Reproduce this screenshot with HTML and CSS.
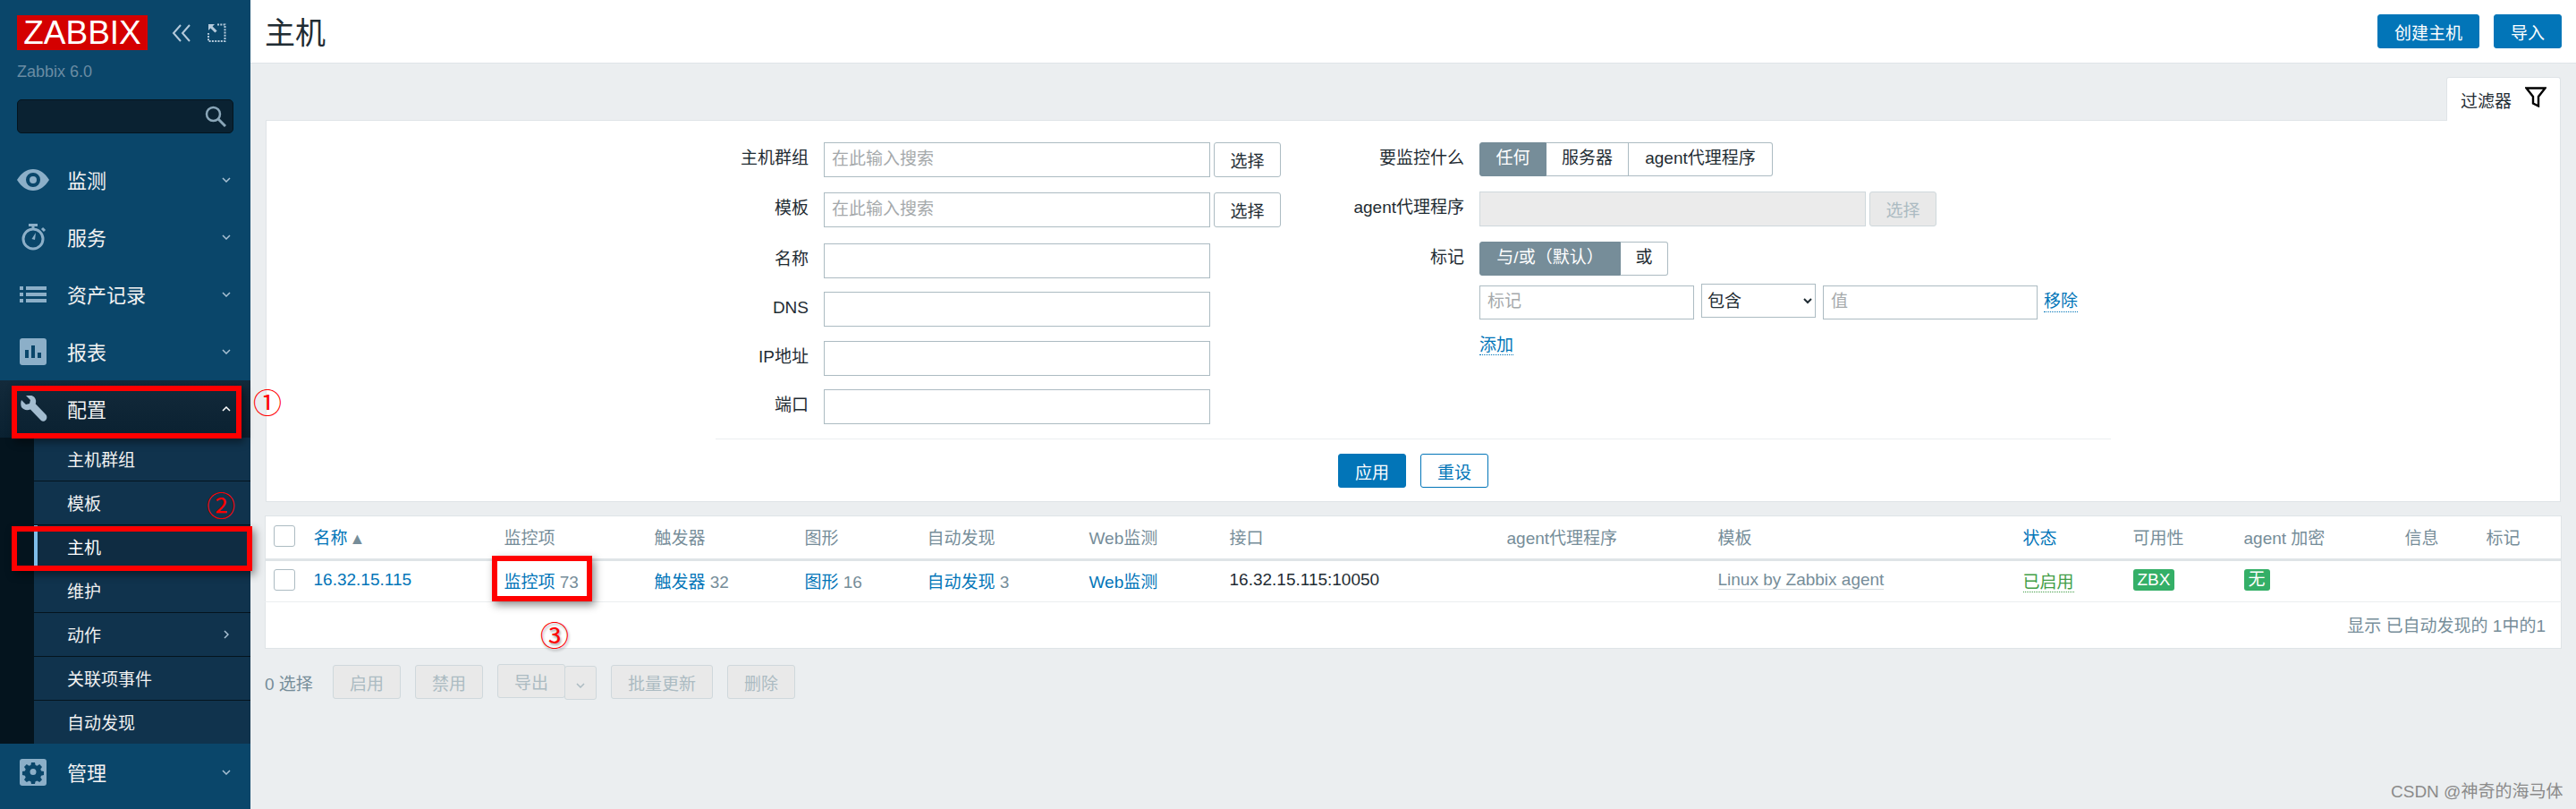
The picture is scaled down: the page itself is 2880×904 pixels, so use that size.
FILE: index.html
```html
<!DOCTYPE html>
<html lang="zh-CN">
<head>
    <meta charset="UTF-8">
    <title>主机 - Zabbix</title>
    <link rel="stylesheet" href="styles.css">
</head>
<body>

    <svg class="sprites" width="0" height="0">
        <symbol id="chev-down" viewBox="0 0 10 6"><path d="M1 1l4 4 4-4" fill="none" stroke="currentColor" stroke-width="1.5"/></symbol>
    </svg>

    <!-- Left menu -->
    <aside class="sidebar">
        <div class="brand">
            <div class="logo">ZABBIX</div>
            <svg class="brand-icon collapse" viewBox="0 0 22 20"><path d="M10 1L2 10l8 9M20 1l-8 9 8 9" fill="none" stroke="currentColor" stroke-width="2"/></svg>
            <svg class="brand-icon kiosk" viewBox="0 0 21 21"><path d="M1 1h7L5.6 3.4l5 5-2.2 2.2-5-5L1 8z" fill="currentColor"/><path d="M11 1.500h8.500V20H1v-9" fill="none" stroke="currentColor" stroke-width="2" stroke-dasharray="2 1.300"/></svg>
        </div>
        <div class="version">Zabbix 6.0</div>
        <div class="search">
            <svg viewBox="0 0 24 24" class="search-icon"><circle cx="9.500" cy="9.500" r="7.500" fill="none" stroke="currentColor" stroke-width="2.500"/><path d="M15 15l8 8" stroke="currentColor" stroke-width="3"/></svg>
        </div>

        <nav class="menu">
            <a class="menu-item">
                <svg class="menu-icon" viewBox="0 0 36 24"><path fill-rule="evenodd" d="M0 12C5 4 11 0 18 0s13 4 18 12c-5 8-11 12-18 12S5 20 0 12zm18 8a8 8 0 1 0 0-16 8 8 0 0 0 0 16zm0-4a4 4 0 1 1 0-8 4 4 0 0 1 0 8z" fill="currentColor"/></svg>
                <span>监测</span>
                <svg class="chev"><use href="#chev-down"/></svg>
            </a>
            <a class="menu-item">
                <svg class="menu-icon" viewBox="0 0 36 30"><circle cx="18" cy="17" r="11" fill="none" stroke="currentColor" stroke-width="3"/><path d="M13 1.500h10M18 2v4M28 5l3 3" stroke="currentColor" stroke-width="3" fill="none"/><path d="M21 10l-1 8-3.500-1z" fill="currentColor"/></svg>
                <span>服务</span>
                <svg class="chev"><use href="#chev-down"/></svg>
            </a>
            <a class="menu-item">
                <svg class="menu-icon" viewBox="0 0 36 18"><path d="M3 0h4v4H3zM3 7h4v4H3zM3 14h4v4H3zM10 0h23v4H10zM10 7h23v4H10zM10 14h23v4H10z" fill="currentColor"/></svg>
                <span>资产记录</span>
                <svg class="chev"><use href="#chev-down"/></svg>
            </a>
            <a class="menu-item">
                <svg class="menu-icon" viewBox="0 0 36 30"><rect x="3" y="0" width="30" height="30" rx="3" fill="currentColor"/><path d="M9 13h4v9H9zM16 8h4v14h-4zM23 16h4v6h-4z" fill="#0a466a"/></svg>
                <span>报表</span>
                <svg class="chev"><use href="#chev-down"/></svg>
            </a>

            <div class="menu-group">
                <a class="menu-item open">
                    <svg class="menu-icon" viewBox="0 0 36 30"><path d="M5 5l5 5 4-1 1-4-5-5c5-1.500 10 .500 11 5 .300 1.500.200 3-.300 4.300L32 21c2 2 1.500 4.500.500 6-1.500 2-4 2.500-6 .500L15 15.500c-4 1.500-8 .500-10-2.500-1-2.500-1-5.500 0-8z" fill="currentColor"/></svg>
                    <span>配置</span>
                    <svg class="chev up"><use href="#chev-down"/></svg>
                </a>
                <ul class="submenu">
                    <li>主机群组</li>
                    <li>模板</li>
                    <li class="active">主机</li>
                    <li>维护</li>
                    <li class="has-more">动作<svg class="chev side"><use href="#chev-down"/></svg></li>
                    <li>关联项事件</li>
                    <li>自动发现</li>
                </ul>
            </div>

            <a class="menu-item">
                <svg class="menu-icon" viewBox="0 0 36 30"><rect x="3" y="0" width="30" height="30" rx="3" fill="currentColor"/><path fill-rule="evenodd" d="M16 5h4l.6 3 2 .8 2.600-1.700 2.800 2.800-1.700 2.600.8 2 2.900.6v4l-2.900.6-.8 2 1.700 2.600-2.800 2.800-2.600-1.700-2 .8-.6 2.900h-4l-.6-2.900-2-.8-2.600 1.700-2.800-2.800 1.700-2.600-.8-2-2.900-.6v-4l2.900-.6.800-2-1.700-2.600 2.800-2.800 2.600 1.700 2-.8zm2 7a3.500 3.500 0 1 0 0 7 3.500 3.500 0 0 0 0-7z" fill="#0a466a" transform="translate(0 -1)"/></svg>
                <span>管理</span>
                <svg class="chev"><use href="#chev-down"/></svg>
            </a>
        </nav>
    </aside>

    <main class="main">
        <header class="topbar">
            <h1>主机</h1>
            <div class="topbar-actions">
                <button class="btn primary wide">创建主机</button>
                <button class="btn primary">导入</button>
            </div>
        </header>

        <div class="content">
            <div class="filter-tab-row">
                <div class="filter-tab">
                    过滤器
                    <svg viewBox="0 0 24 23" class="funnel"><path d="M1.500 1.500h21L15 11v10.500l-6-3V11z" fill="none" stroke="#000" stroke-width="2.400"/></svg>
                </div>
            </div>

            <section class="filter">
                <div class="filter-cols">
                    <div class="form-grid left">
                        <label>主机群组</label>
                        <div class="field"><input class="input" placeholder="在此输入搜索"><button class="btn pick">选择</button></div>
                        <label>模板</label>
                        <div class="field"><input class="input" placeholder="在此输入搜索"><button class="btn pick">选择</button></div>
                        <label>名称</label>
                        <div class="field"><input class="input"></div>
                        <label>DNS</label>
                        <div class="field"><input class="input"></div>
                        <label>IP地址</label>
                        <div class="field"><input class="input"></div>
                        <label>端口</label>
                        <div class="field"><input class="input"></div>
                    </div>

                    <div class="form-grid right">
                        <label>要监控什么</label>
                        <div class="segments">
                            <span class="segment on any">任何</span>
                            <span class="segment server">服务器</span>
                            <span class="segment proxy">agent代理程序</span>
                        </div>
                        <label>agent代理程序</label>
                        <div class="field"><input class="input" disabled><button class="btn pick off" disabled>选择</button></div>
                        <label>标记</label>
                        <div class="segments">
                            <span class="segment on andor">与/或（默认）</span>
                            <span class="segment or">或</span>
                        </div>
                        <span></span>
                        <div class="tag-row">
                            <input class="input tag" placeholder="标记">
                            <select class="select"><option>包含</option></select>
                            <input class="input tag" placeholder="值">
                            <a class="link dotted">移除</a>
                        </div>
                        <span></span>
                        <div><a class="link dotted">添加</a></div>
                    </div>
                </div>

                <div class="filter-actions">
                    <button class="btn primary">应用</button>
                    <button class="btn outline">重设</button>
                </div>
            </section>

            <table class="hosts">
                <thead>
                    <tr>
                        <th><span class="check"></span></th>
                        <th class="link">名称<span class="sort">▲</span></th>
                        <th>监控项</th>
                        <th>触发器</th>
                        <th>图形</th>
                        <th>自动发现</th>
                        <th>Web监测</th>
                        <th>接口</th>
                        <th>agent代理程序</th>
                        <th>模板</th>
                        <th class="link">状态</th>
                        <th>可用性</th>
                        <th>agent 加密</th>
                        <th>信息</th>
                        <th>标记</th>
                    </tr>
                </thead>
                <tbody>
                    <tr>
                        <td><span class="check"></span></td>
                        <td class="link">16.32.15.115</td>
                        <td><a class="link">监控项</a> 73</td>
                        <td><a class="link">触发器</a> 32</td>
                        <td><a class="link">图形</a> 16</td>
                        <td><a class="link">自动发现</a> 3</td>
                        <td class="link">Web监测</td>
                        <td class="dark">16.32.15.115:10050</td>
                        <td></td>
                        <td><a class="tpl">Linux by Zabbix agent</a></td>
                        <td><a class="enabled">已启用</a></td>
                        <td><span class="badge">ZBX</span></td>
                        <td><span class="badge">无</span></td>
                        <td></td>
                        <td></td>
                    </tr>
                </tbody>
                <tfoot>
                    <tr>
                        <td colspan="15">显示 已自动发现的 1中的1</td>
                    </tr>
                </tfoot>
            </table>

            <div class="bulk">
                <span class="selected">0 选择</span>
                <button class="btn off">启用</button>
                <button class="btn off">禁用</button>
                <div class="split">
                    <button class="btn off">导出</button>
                    <button class="btn off caret"><svg class="chev"><use href="#chev-down"/></svg></button>
                </div>
                <button class="btn off long">批量更新</button>
                <button class="btn off">删除</button>
            </div>
        </div>
    </main>

    <!-- Red markers drawn on top of the screenshot -->
    <div class="mark mark-menu"></div>
    <div class="mark mark-hosts"></div>
    <div class="mark mark-items"></div>
    <span class="num num-1">①</span>
    <span class="num num-2">②</span>
    <span class="num num-3">③</span>
    <span class="watermark">CSDN @神奇的海马体</span>

</body>
</html>
```

FILE: styles.css
```css
* {
    margin: 0;
    padding: 0;
    box-sizing: border-box;
}

body {
    font-family: "Liberation Sans", "Noto Sans CJK SC", sans-serif;
    font-size: 19px;
    color: #1f2c33;
    display: flex;
    width: 2880px;
    height: 904px;
    overflow: hidden;
    position: relative;
    background: #ebeef0;
}

.sprites {
    position: absolute;
}

/* Sidebar */
.sidebar {
    width: 280px;
    flex-shrink: 0;
    height: 904px;
    background: #0a466a;
    padding-top: 17px;
    color: #f2f2f2;
}

.brand {
    display: flex;
    align-items: center;
    padding-left: 19px;
    height: 39px;
}

.logo {
    width: 146px;
    height: 39px;
    background: #d40000;
    color: #fff;
    font-size: 37px;
    line-height: 39px;
    text-align: center;
}

.brand-icon {
    color: #b5cadb;
}

.collapse {
    width: 22px;
    height: 20px;
    margin-left: 27px;
}

.kiosk {
    width: 21px;
    height: 21px;
    margin-left: 18px;
}

.version {
    margin: 13px 0 0 19px;
    font-size: 18px;
    line-height: 22px;
    color: #6a8ca3;
}

.search {
    margin: 20px 0 0 19px;
    width: 242px;
    height: 38px;
    background: #0a2232;
    border: 1px solid #04141e;
    border-radius: 5px;
    position: relative;
    display: flex;
    justify-content: flex-end;
    align-items: center;
    padding-right: 7px;
}

.search-icon {
    width: 24px;
    height: 24px;
    color: #8aa6b8;
}

.menu {
    margin-top: 20px;
}

.menu-item {
    display: flex;
    align-items: center;
    height: 64px;
    font-size: 22px;
    padding-left: 19px;
    position: relative;
}

.menu-item span {
    position: absolute;
    left: 75px;
    margin-top: -2px;
}

.menu-icon {
    width: 36px;
    max-height: 30px;
    color: #8cafc8;
}

.menu-item .chev {
    position: absolute;
    left: 248px;
    top: 29px;
    color: #a9c1d3;
}

.chev {
    width: 10px;
    height: 6px;
}

.chev.up {
    transform: rotate(180deg);
    color: #fff !important;
}

.chev.side {
    transform: rotate(-90deg);
    position: absolute;
    left: 210px;
    top: 21px;
    color: #a9c1d3;
}

.menu-group {
    background: #04141e;
}

.menu-item.open {
    background: linear-gradient(#132a3b, #0a2131);
}

.menu-item.open .menu-icon {
    color: #a3bccf;
}

.submenu {
    list-style: none;
    margin-left: 38px;
    height: 342px;
    display: flex;
    flex-direction: column;
    background: #10334d;
}

.submenu li {
    flex: 1;
    display: flex;
    align-items: center;
    padding-left: 37px;
    padding-bottom: 2px;
    border-bottom: 1px solid #04141e;
    position: relative;
}

.submenu li:last-child {
    border-bottom: none;
}

.submenu li.active {
    background: #0f2c42;
    color: #fff;
    border-left: 4px solid #7fbde9;
    padding-left: 33px;
}

/* Main area */
.main {
    flex: 1;
    min-width: 0;
}

.topbar {
    height: 71px;
    background: #fff;
    border-bottom: 1px solid #dfe4e7;
    display: flex;
    justify-content: space-between;
    align-items: center;
    padding: 0 16px 0 16px;
}

.topbar h1 {
    font-size: 34px;
    font-weight: normal;
    margin-top: -2px;
}

.topbar-actions {
    display: flex;
    gap: 16px;
}

.btn {
    font-family: inherit;
    font-size: 19px;
    height: 38px;
    width: 76px;
    border-radius: 3px;
    border: 1px solid #acbbc2;
    background: #fff;
    color: #1f2c33;
}

.btn.primary {
    background: #0275b8;
    border-color: #0275b8;
    color: #fff;
}

.btn.wide {
    width: 114px;
}

.btn.outline {
    border-color: #0275b8;
    color: #0275b8;
}

.btn.off {
    background: #e9e9e9;
    border-color: #cfd8dc;
    color: #acbbc2;
}

.btn.pick {
    width: 75px;
    margin-left: 4px;
    height: 39px;
}

.content {
    padding: 15px 17px 0 16px;
}

.filter-tab-row {
    display: flex;
    justify-content: flex-end;
    height: 48px;
}

.filter-tab {
    width: 128px;
    height: 49px;
    background: #fff;
    border: 1px solid #dfe4e7;
    border-bottom: none;
    border-radius: 3px 3px 0 0;
    display: flex;
    align-items: center;
    padding-left: 15px;
    position: relative;
    z-index: 1;
}

.funnel {
    width: 24px;
    height: 23px;
    margin-left: 15px;
    margin-top: -6px;
}

/* Filter form */
.filter {
    margin-left: 1px;
    height: 427px;
    background: #fff;
    border: 1px solid #dfe4e7;
    padding-top: 24px;
}

.filter-cols {
    display: flex;
    height: 331px;
    padding-left: 499px;
}

.form-grid {
    display: grid;
    column-gap: 17px;
    align-items: start;
}

.form-grid label {
    text-align: right;
    line-height: 36px;
    height: 38px;
}

.form-grid.left {
    width: 636px;
    grid-template-columns: 107px 1fr;
    grid-template-rows: 56px 57px 54px 55px 54px 39px;
}

.form-grid.right {
    margin-left: 7px;
    grid-template-columns: 197px 1fr;
    grid-template-rows: 55px 56px 47px 53px 30px;
}

.field {
    display: flex;
    align-items: flex-start;
}

.input {
    font-family: inherit;
    font-size: 19px;
    width: 432px;
    height: 39px;
    border: 1px solid #acbbc2;
    padding: 0 8px 2px;
    background: #fff;
    color: #1f2c33;
    outline: none;
}

.input::placeholder {
    color: #a5a9ab;
}

.input:disabled {
    background: #ebebeb;
    border-color: #cfd8dc;
}

.segments {
    display: flex;
    height: 38px;
}

.segment {
    border: 1px solid #acbbc2;
    border-left: none;
    line-height: 34px;
    text-align: center;
    background: #fff;
}

.segment:first-child {
    border-left: 1px solid #768d99;
    border-radius: 3px 0 0 3px;
}

.segment:last-child {
    border-radius: 0 3px 3px 0;
}

.segment.on {
    background: #768d99;
    border-color: #768d99;
    color: #fff;
}

.any { width: 75px; }
.server { width: 92px; }
.proxy { width: 161px; }
.andor { width: 158px; }
.or { width: 53px; }

.tag-row {
    display: flex;
    align-items: flex-start;
    padding-top: 2px;
}

.input.tag {
    width: 240px;
    height: 38px;
}

.select {
    font-family: inherit;
    font-size: 19px;
    width: 128px;
    height: 38px;
    margin: -2px 8px 0;
    padding-left: 2px;
    border: 1px solid #acbbc2;
    border-radius: 0;
    background: #fff;
    color: #1f2c33;
}

.link {
    color: #0275b8;
}

.dotted {
    border-bottom: 1px dotted #0275b8;
}

.tag-row .link {
    margin: 7px 0 0 7px;
    line-height: 22px;
}

.filter-actions {
    display: flex;
    justify-content: center;
    gap: 16px;
    width: 1560px;
    margin-left: 502px;
    padding-top: 16px;
    border-top: 1px solid #ebeef0;
}

/* Host table */
.hosts {
    margin-top: 15px;
    width: 2567px;
    table-layout: fixed;
    border-collapse: collapse;
    background: #fff;
    border: 1px solid #dfe4e7;
    color: #768d99;
}

.hosts th {
    font-weight: normal;
    text-align: left;
    height: 49px;
    padding: 0 0 3px;
    border-bottom: 3px solid #dfe4e7;
}

.hosts td {
    padding: 0 0 3px;
    height: 47px;
    border-bottom: 1px solid #ebeef0;
}

.hosts th.link,
.hosts td.link {
    color: #0275b8;
}

.hosts td.dark {
    color: #1f2c33;
}

.hosts tfoot td {
    height: 52px;
    text-align: right;
    padding-right: 17px;
    border-bottom: none;
}

.hosts th:nth-child(1) { width: 54px; }
.hosts th:nth-child(2) { width: 213px; }
.hosts th:nth-child(3) { width: 168px; }
.hosts th:nth-child(4) { width: 168px; }
.hosts th:nth-child(5) { width: 137px; }
.hosts th:nth-child(6) { width: 181px; }
.hosts th:nth-child(7) { width: 157px; }
.hosts th:nth-child(8) { width: 310px; }
.hosts th:nth-child(9) { width: 236px; }
.hosts th:nth-child(10) { width: 341px; }
.hosts th:nth-child(11) { width: 123px; }
.hosts th:nth-child(12) { width: 124px; }
.hosts th:nth-child(13) { width: 180px; }
.hosts th:nth-child(14) { width: 91px; }
.hosts th:nth-child(15) { width: 84px; }

.check {
    display: block;
    width: 24px;
    height: 24px;
    margin-left: 9px;
    border: 1px solid #acbbc2;
    border-radius: 3px;
    background: #fff;
}

.sort {
    font-size: 18px;
    color: #768d99;
    margin-left: 2px;
}

.tpl {
    color: #768d99;
    border-bottom: 1px solid #d5dde1;
}

.enabled {
    color: #429e47;
    border-bottom: 1px dotted #429e47;
}

.badge {
    display: inline-block;
    padding: 0 5px;
    height: 24px;
    line-height: 23px;
    border-radius: 3px;
    background: #34af67;
    color: #fff;
    font-size: 19px;
    vertical-align: middle;
}

/* Bulk actions */
.bulk {
    display: flex;
    align-items: center;
    gap: 16px;
    margin-top: 17px;
    color: #768d99;
}

.selected {
    width: 60px;
}

.split {
    display: flex;
}

.btn.caret {
    width: 36px;
    margin-left: -1px;
    margin-top: 2px;
    color: #acbbc2;
}

.btn.long {
    width: 114px;
}

/* Annotations */
.mark {
    position: absolute;
    border: 6px solid #f00;
    box-shadow: 3px 4px 9px rgba(0, 0, 0, 0.45);
}

.mark-menu {
    left: 13px;
    top: 431px;
    width: 257px;
    height: 59px;
}

.mark-hosts {
    left: 13px;
    top: 588px;
    width: 269px;
    height: 50px;
}

.mark-items {
    left: 550px;
    top: 621px;
    width: 112px;
    height: 51px;
}

.num {
    position: absolute;
    font-family: "Noto Sans CJK SC", sans-serif;
    font-size: 32px;
    line-height: 32px;
    color: #f00;
}

.num-1 { left: 283px; top: 432px; }
.num-2 { left: 231px; top: 547px; }
.num-3 { left: 604px; top: 692px; text-shadow: 1px 2px 3px rgba(0, 0, 0, 0.4); }

.watermark {
    position: absolute;
    left: 2673px;
    top: 874px;
    font-size: 19px;
    line-height: 22px;
    color: #8a8a8a;
}
```
